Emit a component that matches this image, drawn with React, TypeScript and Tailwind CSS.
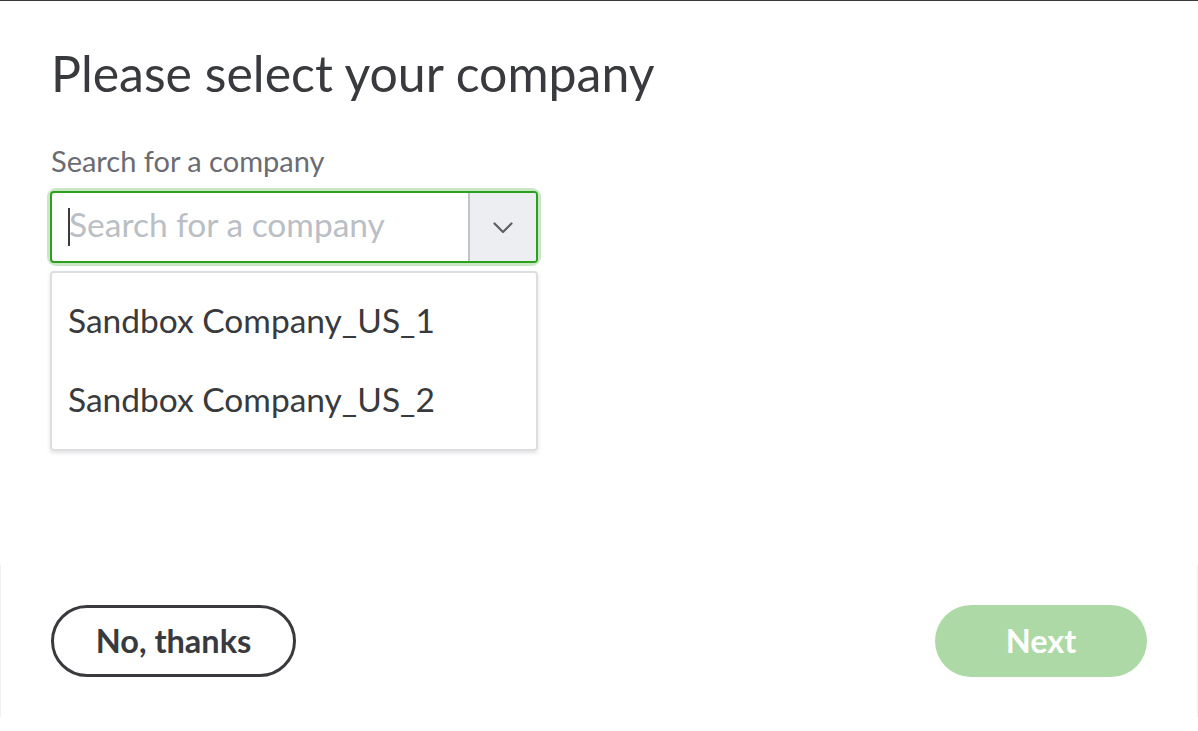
import React, { useState } from 'react';

const companies = ['Sandbox Company_US_1', 'Sandbox Company_US_2'];

const font = { fontFamily: 'Lato, "Noto Sans", sans-serif' };

export default function App() {
    const [query, setQuery] = useState('');

    return (
        <div className="h-[731px] w-[1198px] bg-white border-t border-[#393a3d] flex flex-col text-[#393a3d]" style={font}>
            {/* Header */}
            <div className="px-[51px] pt-[40px]">
                <h1 className="text-[50px] leading-[64px] font-normal">Please select your company</h1>
            </div>

            {/* Company picker */}
            <div className="px-[50px] pt-[41px] w-[588px]">
                <label className="block pl-px text-[29px] leading-[30px] text-[#6b6c72] mb-[15px]">Search for a company</label>
                <div className="rounded-[6px] ring-[3px] ring-[#c9e7c5]">
                    <div className="relative flex h-[72px] rounded-[4px] border-2 border-[#2ca01c] overflow-hidden">
                        <input
                            type="text"
                            value={query}
                            onChange={(e) => setQuery(e.target.value)}
                            placeholder="Search for a company"
                            className="flex-1 min-w-0 pl-[17px] pb-[5px] text-[33.5px] outline-none placeholder:text-[#babec5] caret-[#393a3d]"
                            style={font}
                        />
                        {/* caret as in the capture */}
                        {query === '' && <span className="absolute left-[16px] top-[15px] h-[38px] w-[2px] bg-[#393a3d]" />}
                        <button className="w-[68px] bg-[#eceef1] border-l-2 border-[#c1c4c9] flex items-center justify-center">
                            <svg width="24" height="24" viewBox="0 0 24 24" fill="none" stroke="#5d5e63" strokeWidth="2.2" strokeLinecap="round" strokeLinejoin="round">
                                <path d="M3.5 8.5l8.5 8.5 8.5-8.5" />
                            </svg>
                        </button>
                    </div>
                </div>

                <div className="mt-[8px] rounded-[4px] border-2 border-[#dcdee2] shadow-[0_2px_4px_rgba(0,0,0,0.12)] pt-[8px] pb-[10px]">
                    {companies.map((c) => (
                        <div key={c} className="px-[16px] h-[79px] flex items-center text-[33.5px] text-[#393a3d] cursor-pointer">
                            {c}
                        </div>
                    ))}
                </div>
            </div>

            {/* Footer */}
            <div className="mt-auto mb-[14px] h-[152px] border-x border-[#f0f1f3] px-[50px] flex items-center justify-between">
                <button className="h-[72px] w-[245px] rounded-full border-[3px] border-[#393a3d] text-[32.5px] font-bold text-[#393a3d]">
                    No, thanks
                </button>
                <button className="h-[72px] w-[212px] rounded-full bg-[#acd9a5] text-[32.5px] font-bold text-white">
                    Next
                </button>
            </div>
        </div>
    );
}
